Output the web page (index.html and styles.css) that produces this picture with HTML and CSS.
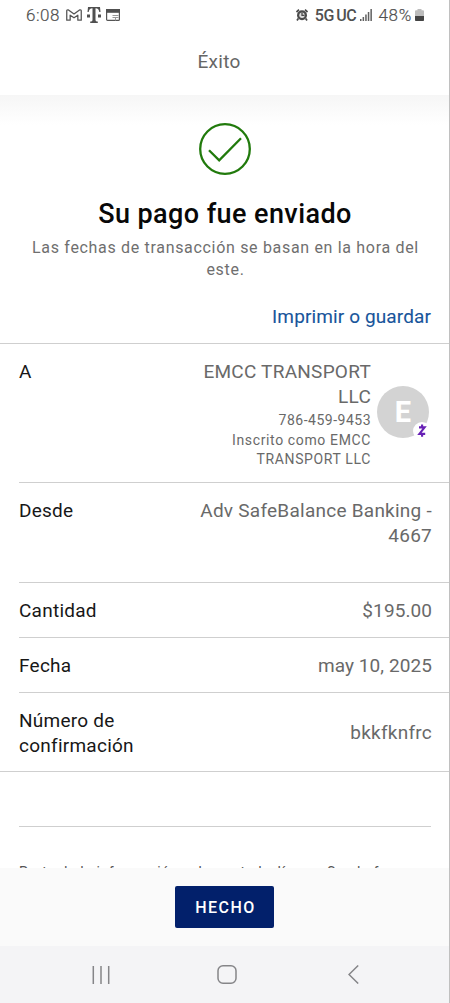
FILE: index.html
```html
<!DOCTYPE html>
<html lang="es">
<head>
<meta charset="utf-8">
<title>Éxito</title>
<link rel="stylesheet" href="styles.css">
</head>
<body>
<div class="screen">
  <div class="status">
    <div class="status-left">
      <span class="time">6:08</span>
      <svg class="mail" width="16" height="12" viewBox="0 0 15 12" preserveAspectRatio="none" fill="none" stroke="#555" stroke-width="1.2" stroke-linejoin="round"><path d="M.7 11.200V1.700Q.8.6 2 .8L7.500 5 13 .8q1.200-.2 1.300.9v9.500h-3.200V6.200L7.500 8.800 3.900 6.200v5z"/></svg>
      <svg class="carrier" width="14" height="16" viewBox="0 0 14 16" fill="#505050"><path d="M1 0h12l.5 5h-1.200C12 2.500 11 1.200 8.500 1.200V12.500c0 1.500.5 2 2.300 2.100V16H3.200v-1.400c1.800-.1 2.300-.6 2.300-2.100V1.200C3 1.200 2 2.500 1.700 5H.5z"/><path d="M0 7.500h3v3H0zM11 7.500h3v3h-3z"/></svg>
      <svg class="cal" width="14" height="12" viewBox="0 0 14 12"><rect x=".6" y=".6" width="12.800" height="10.800" rx="1" fill="#fff" stroke="#555" stroke-width="1.200"/><path d="M0 0h14v3.800H0z" fill="#505050"/><path d="M6.500 6.500h6M6.500 8.500h6M9.500 8.500v3" stroke="#999" stroke-width="1"/></svg>
    </div>
    <div class="status-right">
      <svg class="alarm" width="12" height="12" viewBox="0 0 12 12"><path d="M.5 3 3 .7M11.500 3 9 .7M2.300 9.500 1 11.500M9.700 9.500 11 11.500" stroke="#4b4b4b" stroke-width="1.700"/><circle cx="6" cy="6.200" r="5" fill="#4b4b4b"/><circle cx="6" cy="6.200" r="2.700" fill="#ddd"/><path d="M6 3.500v2.900h2.500" fill="none" stroke="#4b4b4b" stroke-width="1.300"/></svg>
      <span class="net">5G<span>UC</span></span>
      <svg class="signal" width="12" height="12" viewBox="0 0 12 12" fill="#606060"><path d="M0 10h1.500v2H0zM2.600 8h1.500v4H2.600zM5.200 5.500h1.500V12H5.200zM7.800 3h1.500v9H7.800zM10.400 0h1.500v12h-1.500z"/></svg>
      <span class="pct">48%</span>
      <svg class="battery" width="9" height="12" viewBox="0 0 9 12"><path d="M2.500 0h4v1.200H8q1 0 1 1V11q0 1-1 1H1q-1 0-1-1V2.200q0-1 1-1h1.500z" fill="#bcbcbc"/><path d="M0 7h9v4q0 1-1 1H1q-1 0-1-1z" fill="#444"/></svg>
    </div>
  </div>
  <header class="title">Éxito</header>
  <main class="content">
    <section class="hero">
      <svg class="check" width="52" height="52" viewBox="0 0 52 52" fill="none" stroke="#217a0c" stroke-width="2.300"><circle cx="26" cy="26" r="24.800"/><path d="M10 27.200 20.200 37.400 42 15.300"/></svg>
      <h1>Su pago fue enviado</h1>
      <p>Las fechas de transacción se basan en la hora del este.</p>
      <a class="print">Imprimir o guardar</a>
    </section>
    <dl class="details">
      <div class="row to">
        <dt>A</dt>
        <dd class="payee">
          <div class="payee-text">
            <div class="name">EMCC TRANSPORT LLC</div>
            <div class="phone">786-459-9453</div>
            <div class="enrolled">Inscrito como EMCC TRANSPORT LLC</div>
          </div>
          <div class="avatar">E
            <svg class="badge" width="18" height="18" viewBox="0 0 18 18"><circle cx="9" cy="9" r="9" fill="#fff"/><path d="M6 5.400h5.600L6.400 11.900h5.800M9.100 2.500v2.900M9.100 11.900v2.900" fill="none" stroke="#6720b5" stroke-width="2.100"/></svg>
          </div>
        </dd>
      </div>
      <div class="row from"><dt>Desde</dt><dd>Adv SafeBalance Banking - 4667</dd></div>
      <div class="row"><dt>Cantidad</dt><dd class="tight">$195.00</dd></div>
      <div class="row"><dt>Fecha</dt><dd class="tight">may 10, 2025</dd></div>
      <div class="row confirm"><dt>Número de confirmación</dt><dd>bkkfknfrc</dd></div>
    </dl>
    <div class="note">Parte de la información sobre usted y líneas. Con la forma</div>
  </main>
  <footer class="actions"><button class="done">HECHO</button></footer>
  <nav class="nav">
    <svg width="18" height="18" viewBox="0 0 18 18" stroke="#858588" stroke-width="1.500"><path d="M1.300 0v18M9 0v18M16.700 0v18"/></svg>
    <svg class="home" width="20" height="19" viewBox="0 0 20 19" fill="none" stroke="#858588" stroke-width="1.500"><rect x="1" y=".8" width="18" height="17.400" rx="5"/></svg>
    <svg width="11" height="19" viewBox="0 0 11 19" fill="none" stroke="#858588" stroke-width="1.500"><path d="M10.200.5 1 9.500l9.200 9"/></svg>
  </nav>
</div>
</body>
</html>
```
FILE: styles.css
```css
* { box-sizing: border-box; }
body { margin: 0; font-family: Roboto, sans-serif; background: #fff; }
.screen { width: 450px; height: 1003px; display: flex; flex-direction: column; overflow: hidden; border-right: 1px solid #c0c0c0; }
.status { height: 30px; flex: none; display: flex; justify-content: space-between; padding: 0 25px 0 26px; color: #505050; }
.status-left, .status-right { display: flex; align-items: center; height: 30px; }
.time { font-size: 17px; font-weight: 300; letter-spacing: .5px; -webkit-text-stroke: .2px #505050; }
.mail { margin-left: 6px; }
.carrier { margin-left: 5px; }
.cal { margin-left: 5px; }
.net { margin-left: 7px; font-size: 16px; font-weight: 500; letter-spacing: -.3px; }
.net span { margin-left: 2px; }
.signal { margin-left: 4px; }
.pct { margin-left: 6px; font-size: 17px; font-weight: 300; letter-spacing: .7px; -webkit-text-stroke: .2px #505050; }
.battery { margin-left: 3px; }
.title { height: 65px; flex: none; padding: 19px 11px 0 0; text-align: center; font-size: 19px; line-height: 25px; letter-spacing: .3px; color: #666; }
.content { height: 773px; flex: none; overflow: hidden; background: linear-gradient(#f6f6f6, #fff 30px); }
.hero { height: 248px; display: flex; flex-direction: column; align-items: center; padding-top: 28px; }
.check { flex: none; }
h1 { margin: 22px 0 0; padding-left: 1px; font-size: 27px; line-height: 34px; font-weight: 500; letter-spacing: .42px; color: #080808; }
.hero p { margin: 6px 0 0; padding-left: 2px; width: 412px; text-align: center; font-size: 16px; line-height: 22px; letter-spacing: .68px; color: #6f6f6f; }
.print { align-self: flex-end; margin: 23px 18px 0 0; font-size: 19px; line-height: 25px; letter-spacing: .12px; color: #18559b; -webkit-text-stroke: .1px #18559b; }
.details { margin: 0; border-top: 1px solid #cfcfcf; border-bottom: 1px solid #cfcfcf; font-size: 19px; line-height: 25px; letter-spacing: .25px; }
.row { margin-left: 19px; padding: 15px 17px 14px 0; display: flex; justify-content: space-between; height: 55px; border-bottom: 1px solid #cfcfcf; }
.row dt { color: #171717; width: 130px; }
.row dd { margin: 0; color: #696969; text-align: right; width: 240px; }
.row .tight { letter-spacing: .08px; }
.row.to { height: 139px; }
.row .payee { display: flex; justify-content: flex-end; gap: 6px; }
.payee-text { width: 175px; }
.phone, .enrolled { font-size: 14px; line-height: 19px; letter-spacing: .63px; }
.phone { line-height: 22px; letter-spacing: .5px; }
.row.to dd { width: auto; margin-right: 3px; }
.avatar { position: relative; width: 52px; height: 52px; flex: none; margin-top: 27px; border-radius: 50%; background: #d3d3d3; color: #fff; font-size: 29px; line-height: 52px; font-weight: 700; text-align: center; letter-spacing: 0; }
.badge { position: absolute; right: -2px; bottom: -2px; }
.row.from { height: 100px; }
.row.confirm { height: 78px; border-bottom: 0; }
.confirm dd { padding-top: 12px; }
.note { margin: 54px 18px 0 19px; padding-top: 35px; border-top: 1px solid #cfcfcf; font-size: 14px; line-height: 20px; letter-spacing: .6px; white-space: nowrap; color: #555; }
.actions { height: 78px; flex: none; background: #fafafa; padding-top: 18px; text-align: center; }
.done { width: 99px; height: 42px; padding: 0 0 0 2px; border: 0; border-radius: 2px; background: #02206b; color: #fff; font: 500 16px Roboto, sans-serif; letter-spacing: 1.5px; }
.nav { height: 57px; flex: none; background: #f4f4f6; display: flex; align-items: center; padding: 0 90px 0 92px; justify-content: space-between; }
.home { margin-right: 4px; }
```
